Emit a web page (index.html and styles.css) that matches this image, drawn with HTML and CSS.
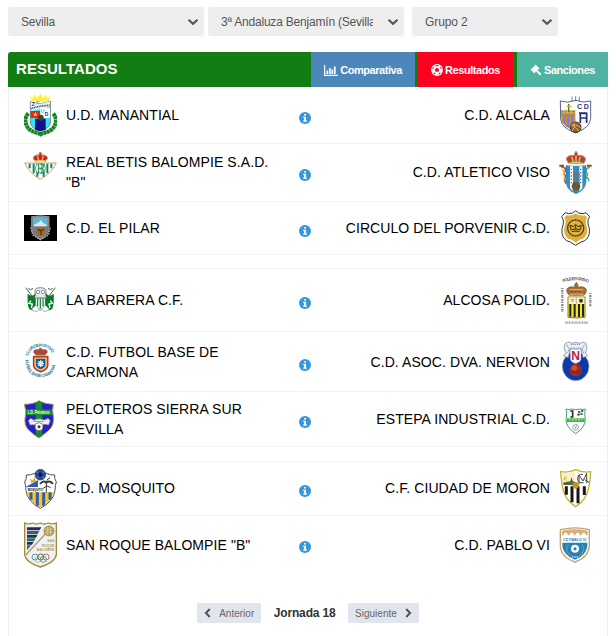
FILE: index.html
```html
<!DOCTYPE html>
<html lang="es">
  <head>
    <meta charset="UTF-8" />
    <meta name="viewport" content="width=device-width, initial-scale=1.0" />
    <title>Resultados</title>
    <link rel="stylesheet" href="styles.css">
  </head>
  <body>
    <svg class="defs">
      <symbol id="info" viewBox="0 0 12 12">
        <circle cx="6" cy="6" r="6" fill="#3498db" />
        <path d="M5 1.9h2v1.7H5zM4.2 4.8H7v3.6h.9v1.4H4.2V8.4h.9V6.1h-.9z" fill="#fff" />
      </symbol>
      <symbol id="arrow" viewBox="0 0 12 8">
        <path d="M1.500 1.700L6 5.700l4.500-4" fill="none" stroke="#555" stroke-width="2.200" />
      </symbol>
    </svg>

    <div class="filters">
      <div class="select"><span>Sevilla</span><svg><use href="#arrow" /></svg></div>
      <div class="select"><span>3ª Andaluza Benjamín (Sevilla)</span><svg><use href="#arrow" /></svg></div>
      <div class="select group"><span>Grupo 2</span><svg><use href="#arrow" /></svg></div>
    </div>

    <div class="panel">
      <div class="header">
        <h1>RESULTADOS</h1>
        <div class="tabs">
          <a class="tab blue">
            <svg width="14" height="11" viewBox="0 0 14 11"><path d="M.6 0v10.300H14" fill="none" stroke="#fff" stroke-width="1.200" /><path d="M3.300 9V5.500M5.800 9V3M8.300 9V4.500M10.800 9V1.500" fill="none" stroke="#fff" stroke-width="1.700" /></svg>
            <span>Comparativa</span>
          </a>
          <a class="tab red">
            <svg width="12" height="12" viewBox="0 0 12 12"><circle cx="6" cy="6" r="5.900" fill="#fff" /><path d="M6 3.700l2.200 1.600-.8 2.500H4.600l-.8-2.500zM3.900 1.300L6 2.500l2.100-1.200Q6 .5 3.900 1.300zM1 5.500l1.700-1.200.3-1.700Q1.200 3.500 1 5.500zM11 5.500L9.300 4.300 9 2.600q1.800.9 2 2.900zM2 8.700l2 .1.800 2q-1.900-.4-2.800-2.100zM10 8.700l-2 .1-.8 2q1.900-.4 2.800-2.100z" fill="#ff0021" /></svg>
            <span>Resultados</span>
          </a>
          <a class="tab teal">
            <svg width="12" height="12" viewBox="0 0 12 12"><path d="M5.500.5l4 4-1.200.7-1 1 4.200 3.600-1.700 1.700L6.200 7.300l-1 1-.7 1.200-4-4 1.200-.7 3-3z" fill="#fff" /></svg>
            <span>Sanciones</span>
          </a>
        </div>
      </div>

      <div class="match h57">
        <!-- U.D. Manantial -->
        <svg class="crest" width="33" height="43" viewBox="0 0 99 129">
          <path d="M13 58C-1 72 3 97 19 108c12 8 23 8 31 13 8-5 19-5 31-13 16-11 20-36 6-50" fill="none" stroke="#128522" stroke-width="12" stroke-dasharray="9 1" />
          <path d="M19 23q31 12 60-2v66q-4 17-30 25-26-8-30-25z" fill="#38e4f0" stroke="#555" stroke-width="2" />
          <path d="M20 24q30 11 58-2v17L20 51z" fill="#e8f3fc" />
          <path d="M20 51h28v21H20z" fill="#e52519" />
          <path d="M49 42h29v30H49z" fill="#fff" />
          <path d="M33 74h32v33l-16 5-16-5z" fill="#10138c" />
          <path d="M34 54l2 5h5l-4 3 2 6-5-4-5 4 2-6-4-3h5z" fill="#ffe32b" />
          <path d="M16 4l9 10 7-12 7 11 10-14 8 14 8-11 6 12 10-10-7 16q-25 7-51 0z" fill="#fff238" />
          <path d="M20 44q28-9 58-10" stroke="#446" stroke-width="5" stroke-dasharray="3 2" fill="none" />
          <text x="23" y="36" class="mark navy">Z</text><text x="36" y="34" class="mark cyan">F</text>
          <text x="50" y="56" class="mark cyan">U</text><text x="62" y="66" class="mark navy">D</text>
          <circle cx="50" cy="71" r="9" fill="#503b28" />
        </svg>
        <div class="team">U.D. MANANTIAL</div>
        <svg class="info"><use href="#info" /></svg>
        <div class="team away">C.D. ALCALA</div>
        <!-- C.D. Alcala -->
        <svg class="crest" width="33" height="38" viewBox="0 0 99 114">
          <path d="M4 15q23 8 46-2 22 9 45 2v52q-2 29-45 43Q8 98 5 69z" fill="#fff" stroke="#36457c" stroke-width="2.500" />
          <path d="M39 1v14M50 0v16M61 2v13" stroke="#36457c" stroke-width="2" />
          <path d="M6 43h43v17H6z" fill="#b58a30" />
          <path d="M7 60h42v46Q11 91 8 72z" fill="#8876dd" />
          <path d="M11 60v22M22 60v34M33 60v36M45 58v35" stroke="#c79526" stroke-width="5" />
          <path d="M8 51h41M13 43v8M24 43v8M36 43v8" stroke="#e9d28b" stroke-width="2" />
          <path d="M29 24v23" stroke="#3a7d36" stroke-width="4" />
          <path d="M23 31h14" stroke="#dfa721" stroke-width="4" />
          <text x="54" y="39" class="mark big navy">C</text><text x="74" y="39" class="mark big navy">D</text>
          <path d="M64 81V52h19v29M64 66h19M60 51h23" fill="none" stroke="#202d77" stroke-width="5" />
          <circle cx="50" cy="94" r="16" fill="#8b622c" stroke="#3d2e23" stroke-width="3" />
          <path d="M35 90q15-8 30 5M40 105q9-11 5-26M38 84l23 22" stroke="#e2b063" stroke-width="3" fill="none" />
        </svg>
      </div>

      <div class="match h58">
        <!-- Real Betis Balompie -->
        <svg class="crest top" width="33" height="28" viewBox="0 0 99 84">
          <path d="M2 33h95Q81 65 49 82 17 65 2 33z" fill="#fff" stroke="#d1a15b" stroke-width="3" />
          <path d="M17 35v14M29 35v29M40 35v39M59 35v39M70 35v29M82 35v14" stroke="#158b54" stroke-width="6" />
          <circle cx="49" cy="49" r="15" fill="#e5f2e8" stroke="#239064" stroke-width="2" />
          <path d="M44 36v28M54 36v28M42 49h15" stroke="#26865a" stroke-width="3" />
          <path d="M49 37q12 0 10 7t-10 6q13 0 11 7t-11 6" fill="none" stroke="#26865a" stroke-width="3" />
          <path d="M33 26Q22 16 33 11q7-4 12-1V4l4-4 4 4v6q5-3 12 1 11 5 0 15z" fill="#c8202b" stroke="#cb9947" stroke-width="3" />
          <path d="M33 29q17-6 33 0M40 12l4 13M58 12l-4 13" stroke="#edbe60" stroke-width="4" fill="none" />
        </svg>
        <div class="team">REAL BETIS BALOMPIE S.A.D. "B"</div>
        <svg class="info"><use href="#info" /></svg>
        <div class="team away">C.D. ATLETICO VISO</div>
        <!-- C.D. Atletico Viso -->
        <svg class="crest" width="33" height="44" viewBox="0 0 99 132">
          <path d="M6 46q16 4 13 14-9 8 2 15-9 12 1 23" fill="none" stroke="#d43f32" stroke-width="5" />
          <path d="M8 55q11 7 6 14 6 14 4 20" fill="none" stroke="#edc13b" stroke-width="4" />
          <path d="M93 48q-15 5-11 17 10 7-3 13 14 4 9 13" fill="none" stroke="#45b06d" stroke-width="4" />
          <path d="M1 44h14M84 44h14" stroke="#8d4b1c" stroke-width="6" />
          <path d="M21 44q30 4 60 0v42q2 30-30 42-32-12-30-42z" fill="#2493d1" stroke="#456" stroke-width="1.500" />
          <path d="M33 46h9v73q-6-3-9-8zM61 46h9v66q-4 5-9 8z" fill="#fff" />
          <path d="M37 53v50M65 53v50" stroke="#667" stroke-width="4" stroke-dasharray="4 6" />
          <path d="M47 63v45M54 56v51M60 65v34M42 71h20" stroke="#64707c" stroke-width="3" />
          <circle cx="51" cy="106" r="13" fill="#6c5731" />
          <path d="M30 38q-14-16-2-22 9-5 19-2V7l4-6 4 6v7q11-3 20 3 10 6-2 21z" fill="#c13b36" stroke="#b58d4b" stroke-width="3" />
          <path d="M30 38q20-7 43 0M38 17l5 16M51 14v18M64 17l-5 16" stroke="#eac57a" stroke-width="4" fill="none" />
          <path d="M34 29h35" stroke="#398b52" stroke-width="4" stroke-dasharray="5 5" />
        </svg>
      </div>

      <div class="match h53">
        <!-- C.D. El Pilar -->
        <svg class="crest" width="33" height="26" viewBox="0 0 99 78">
          <path d="M0 0h99v78H0z" fill="#000" />
          <path d="M23 5q27-5 52 0v32q1 24-26 37-27-13-26-37z" fill="#737b80" stroke="#8f979c" stroke-width="3" />
          <path d="M27 8q23-4 44 0v26H27z" fill="#5cb7d3" />
          <path d="M30 29l14-7 8-7 5 9 11 5v5H30z" fill="#dce6e2" />
          <path d="M20 37l6 23 23 14 24-14 6-23" fill="none" stroke="#b9ac98" stroke-width="4" stroke-dasharray="5 3" />
          <circle cx="50" cy="49" r="13" fill="#a86425" />
          <path d="M40 43l11 4 9-5M51 47v13" stroke="#38251b" stroke-width="3" fill="none" />
        </svg>
        <div class="team">C.D. EL PILAR</div>
        <svg class="info"><use href="#info" /></svg>
        <div class="team away">CIRCULO DEL PORVENIR C.D.</div>
        <!-- Circulo del Porvenir -->
        <svg class="crest" width="33" height="36" viewBox="0 0 99 108">
          <path d="M50 2q8 10 22 9l9-3 11 12q-7 8-5 22 6 13 4 28-4 22-25 26L50 106 34 96Q13 92 9 70 7 55 13 42q2-14-5-22L19 8l9 3Q42 12 50 2z" fill="#fff" stroke="#333" stroke-width="3" />
          <path d="M50 10q10 9 27 6l7 6q-5 10-3 21 6 13 3 25-4 18-22 21L50 98 38 89Q20 86 16 68q-3-12 3-25 2-11-3-21l7-6q17 3 27-6z" fill="#e0b13a" />
          <circle cx="50" cy="54" r="24" fill="none" stroke="#353026" stroke-width="4" stroke-dasharray="4 1" />
          <path d="M36 59l-3-13 10 4 7-7 7 7 10-4-3 13q-14-4-28 0zM38 65q12-4 24 0M50 45v13" fill="none" stroke="#353026" stroke-width="3" />
        </svg>
      </div>

      <div class="spacer h14"></div>

      <div class="match h63">
        <!-- La Barrera C.F. -->
        <svg class="crest" width="33" height="26" viewBox="0 0 99 78">
          <path d="M5 2l22 29M94 2L72 31M13 4q7 8 14 0M86 4q-7 8-14 0" stroke="#396742" stroke-width="3" fill="none" />
          <path d="M11 20q15 13 23-1l8 17v26q-16 14-27 3-6-16-4-45zM89 20q-15 13-23-1l-8 17v26q16 14 27 3 6-16 4-45z" fill="#0a7a26" />
          <path d="M21 41l-6 8 10 2-3 12M79 41l6 8-10 2 3 12" stroke="#fff" stroke-width="4" fill="none" />
          <path d="M33 14q-2-12 16-12t17 12q-3 12 2 20H31q5-8 2-20z" fill="#e5e8e5" stroke="#555" stroke-width="2" />
          <circle cx="42" cy="15" r="5" fill="#fff" stroke="#666" stroke-width="2" /><circle cx="57" cy="15" r="5" fill="#fff" stroke="#666" stroke-width="2" />
          <path d="M34 33h30v19q-5 13-15 18-10-5-15-18z" fill="#fff" stroke="#445" stroke-width="2" />
          <path d="M41 34v24M49 34v31M57 34v24" stroke="#228e45" stroke-width="4" />
          <path d="M23 67q13 12 23 0l-10-13M76 67q-13 12-23 0l10-13" fill="#fff" stroke="#aaa" stroke-width="3" />
        </svg>
        <div class="team">LA BARRERA C.F.</div>
        <svg class="info"><use href="#info" /></svg>
        <div class="team away">ALCOSA POLID.</div>
        <!-- Alcosa Polid. -->
        <svg class="crest" width="33" height="50" viewBox="0 0 99 150">
          <path id="alcosa-top" d="M12 22q38-14 78 2" fill="none" />
          <text class="ring gray"><textPath href="#alcosa-top" textLength="78">POLIDEPORTIVO</textPath></text>
          <path d="M10 39v71M94 54v41" stroke="#888" stroke-width="7" stroke-dasharray="3 3 6 2" />
          <path d="M19 143h69" stroke="#999" stroke-width="7" stroke-dasharray="4 2 2 2" />
          <path d="M30 61Q16 44 30 37q8-4 17 0v-8l5-7 5 7v8q9-4 18 0 15 7 0 24z" fill="#a56e32" stroke="#765027" stroke-width="2" />
          <path d="M31 60q20-7 43 0M32 44h41" stroke="#d8ac57" stroke-width="4" fill="none" />
          <path d="M35 50h34" stroke="#b52f2c" stroke-width="4" stroke-dasharray="6 6" />
          <path d="M27 66h51v61q-23 4-51 0z" fill="#f2e42c" stroke="#8f7833" stroke-width="3" />
          <path d="M29 67h47v20H29z" fill="#f5f0d8" />
          <path d="M34 87v38M47 87v39M60 87v39M72 87v38" stroke="#242420" stroke-width="6" />
          <path d="M52 67v20" stroke="#b49b51" stroke-width="2" /><circle cx="66" cy="77" r="6" fill="#463927" /><path d="M35 74h11M38 79h5" stroke="#c3a54d" stroke-width="4" />
        </svg>
      </div>

      <div class="match h60">
        <!-- C.D. Futbol Base de Carmona -->
        <svg class="crest up" width="33" height="35" viewBox="0 0 99 105">
          <path id="carmona-top" d="M13 39Q19 12 49 11t38 28" fill="none" />
          <path id="carmona-bottom" d="M4 51q3 50 46 51t46-51" fill="none" />
          <text class="ring teal-text"><textPath href="#carmona-top" textLength="92">CLUB DEPORTIVO</textPath></text>
          <text class="ring teal-text"><textPath href="#carmona-bottom" textLength="140">FUTBOL BASE CARMONA</textPath></text>
          <path d="M36 35q-13-9-2-15h10l5-6 6 6h10q11 6-2 15z" fill="#b84238" stroke="#795542" stroke-width="2" />
          <path d="M36 35h28" stroke="#8e6537" stroke-width="4" />
          <path d="M29 41h42v27q-2 13-21 18-19-5-21-18z" fill="#f0cf52" stroke="#bb3733" stroke-width="5" />
          <path d="M36 47h28v21q-3 7-14 11-11-4-14-11z" fill="#1759a6" />
          <path d="M50 52v20M40 62h20M43 55l14 14M57 55L43 69" stroke="#e6f7ff" stroke-width="4" />
        </svg>
        <div class="team">C.D. FUTBOL BASE DE CARMONA</div>
        <svg class="info"><use href="#info" /></svg>
        <div class="team away">C.D. ASOC. DVA. NERVION</div>
        <!-- C.D. Asoc. Dva. Nervion -->
        <svg class="crest" width="33" height="41" viewBox="0 0 99 123">
          <ellipse cx="50" cy="76" rx="40" ry="43" fill="#0938b2" stroke="#b7ad75" stroke-width="2" />
          <path d="M19 7q13-7 19 0 12-6 24 0 8-7 19 0l3 13-5 17 7 7-14 6-6-28H34l-6 28-15-6 8-7-6-17z" fill="#eaf0f7" stroke="#68799a" stroke-width="2" />
          <path d="M23 11l8 13-6 13M77 11l-8 13 6 13M35 10h30" fill="none" stroke="#7c8ba6" stroke-width="3" stroke-dasharray="4 2" />
          <path d="M34 25h32v30q-1 8-16 13-15-5-16-13z" fill="#fff" stroke="#8696b0" stroke-width="1.500" />
          <text x="50" y="57" class="mark letter">N</text>
          <circle cx="50" cy="87" r="19" fill="#9f2c20" /><circle cx="46" cy="81" r="8" fill="#c95333" />
          <path d="M32 90q17 9 36-2" fill="none" stroke="#5a2020" stroke-width="2" />
        </svg>
      </div>

      <div class="match h55">
        <!-- Peloteros Sierra Sur -->
        <svg class="crest" width="33" height="39" viewBox="0 0 99 117">
          <path d="M45 2q16 10 43 11-4 19 0 35 4 29-15 44-15 13-28 22-15-9-29-22Q-2 77 4 48q3-16-3-35Q30 12 45 2z" fill="#2420cd" stroke="#b8a64d" stroke-width="3" />
          <path d="M35 7q10-4 20 0v100l-10 5-10-5zM6 28h78v18H6z" fill="#168b2c" />
          <text x="11" y="43" class="mark white" textLength="66" lengthAdjust="spacingAndGlyphs">L.D. Peloteros</text>
          <path d="M13 62l7-7 9 5q16-7 33 0l10-5 7 7-5 13-14-2-14 11-15-10-13 1z" fill="#eef0ef" stroke="#777" stroke-width="2" />
          <path d="M29 64h31" stroke="#567" stroke-width="3" stroke-dasharray="3 2" />
          <circle cx="45" cy="80" r="12" fill="#fff" stroke="#555" stroke-width="2" /><path d="M45 75l5 4-2 6h-6l-2-6z" fill="#444" />
        </svg>
        <div class="team">PELOTEROS SIERRA SUR SEVILLA</div>
        <svg class="info"><use href="#info" /></svg>
        <div class="team away">ESTEPA INDUSTRIAL C.D.</div>
        <!-- Estepa Industrial -->
        <svg class="crest down" width="33" height="27" viewBox="0 0 99 81">
          <path d="M21 3q9 4 17 0 12 4 25 0 7 4 16 0-4 13 0 31 0 24-29 43-29-19-29-43 4-18 0-31z" fill="#fff" stroke="#38aa65" stroke-width="3" />
          <path d="M24 31h53v11H24z" fill="#35b553" /><path d="M30 35h40" stroke="#b5d947" stroke-width="5" stroke-dasharray="6 3" />
          <path d="M34 9h7v18h-7M57 12h7M66 9h7M55 20h7M64 18h7" stroke="#26332d" stroke-width="5" fill="none" />
          <circle cx="50" cy="58" r="9" fill="#fff" stroke="#888" stroke-width="2" /><path d="M44 55l12 6M53 51l-6 15" stroke="#999" stroke-width="2" />
        </svg>
      </div>

      <div class="spacer h15"></div>

      <div class="match h54">
        <!-- C.D. Mosquito -->
        <svg class="crest" width="33" height="40" viewBox="0 0 99 120">
          <path d="M7 18q14 1 24-5h36q12 6 25 5-2 11 5 21-4 10-4 25-4 34-44 54Q10 98 6 64 6 49 2 39q7-10 5-21z" fill="#fff" stroke="#484f58" stroke-width="3" />
          <path d="M5 54l37-21v21z" fill="#3858b8" /><path d="M18 29l8 5 6-9 4 12-14 5z" fill="#ddb033" />
          <path d="M10 70h79q-5 28-40 45Q15 98 10 70z" fill="#f3cb16" />
          <path d="M21 70v22M40 70v40M59 70v40M78 70v22" stroke="#3659b5" stroke-width="9" />
          <path d="M8 56h48v11H8z" fill="#fff" />
          <text x="11" y="66" class="mark small" textLength="46" lengthAdjust="spacingAndGlyphs">MOSQUITO</text>
          <path d="M48 45q9-12 19-4 8-8 20 3" stroke="#37393e" stroke-width="6" fill="none" />
          <path d="M67 41v30M67 52l-10 6M67 50l13 6M68 34l10-8" stroke="#37393e" stroke-width="3" fill="none" />
          <circle cx="49" cy="17" r="16" fill="#284b9c" stroke="#303848" stroke-width="2" /><path d="M49 10l7 5-3 8h-8l-3-8z" fill="#151d3c" /><path d="M38 8l5 4M60 8l-5 4M39 27l5-5M60 27l-6-5" stroke="#799bdb" stroke-width="2" />
        </svg>
        <div class="team">C.D. MOSQUITO</div>
        <svg class="info"><use href="#info" /></svg>
        <div class="team away">C.F. CIUDAD DE MORON</div>
        <!-- C.F. Ciudad de Moron -->
        <svg class="crest" width="33" height="39" viewBox="0 0 99 117">
          <path d="M5 8q25 4 45-6 20 10 45 6-1 20-5 44-7 41-40 61-33-20-40-61Q6 28 5 8z" fill="#fff" stroke="#c5b421" stroke-width="4" />
          <path d="M9 11q22 3 40-5v41H13z" fill="#f4f0c9" />
          <path d="M17 19l3 6h6l-5 4 2 7-6-4-6 4 2-7" fill="#f3cb24" />
          <path d="M12 41l12-3 10-1 4-12 3 11 9 4v8H14z" fill="#526344" />
          <path d="M15 52h70q-7 38-35 57-28-19-35-57z" fill="#fff" />
          <path d="M22 52v25M39 52v48M57 52v51M76 52v26" stroke="#171717" stroke-width="9" />
          <path d="M72 16q-16-2-16 13t18 12M60 46V18l12 18 11-23v29M77 32l14 9" stroke="#444" stroke-width="3" fill="none" />
          <circle cx="50" cy="49" r="10" fill="#bd922c" />
        </svg>
      </div>

      <div class="match last h57">
        <!-- San Roque Balompie -->
        <svg class="crest" width="33" height="46" viewBox="0 0 99 138">
          <path d="M2 3q12 5 25 0 10 6 22 0 12 6 24 0 12 5 24 0v95q-3 23-48 37Q5 121 2 98z" fill="#eef1f5" stroke="#a58b37" stroke-width="4" />
          <path d="M9 16h43l-5 9H9z" fill="#30265e" /><path d="M9 27h37l-5 9H9z" fill="#217357" /><path d="M9 38h32l-5 9H9z" fill="#30265e" /><path d="M9 49h26l-5 9H9z" fill="#217357" /><path d="M9 60h20l-5 8H9z" fill="#30265e" /><path d="M9 70h13L9 84z" fill="#217357" />
          <path d="M5 99L65 35l15-18" stroke="#b29a4d" stroke-width="4" fill="none" />
          <circle cx="75" cy="27" r="15" fill="#b6a565" stroke="#8d7a3b" stroke-width="2" /><path d="M65 22h20M64 30h22M71 14v25M80 14v25" stroke="#e0d7a7" stroke-width="2" />
          <text x="91" y="61" class="mark gold">SAN</text><text x="91" y="74" class="mark gold">ROQUE</text><text x="91" y="86" class="mark gold">BALOMPIE</text>
          <g fill="none" stroke-width="2.500"><circle cx="33" cy="105" r="9" stroke="#3a83b5" /><circle cx="50" cy="105" r="9" stroke="#444" /><circle cx="66" cy="105" r="9" stroke="#ce4650" /><circle cx="42" cy="112" r="9" stroke="#cfaf4c" /><circle cx="58" cy="112" r="9" stroke="#43946c" /></g>
        </svg>
        <div class="team">SAN ROQUE BALOMPIE "B"</div>
        <svg class="info"><use href="#info" /></svg>
        <div class="team away">C.D. PABLO VI</div>
        <!-- C.D. Pablo VI -->
        <svg class="crest" width="33" height="36" viewBox="0 0 99 108">
          <path d="M4 8q46-11 87 0v49q-3 35-43 48Q7 92 4 57z" fill="#fff" stroke="#c5a374" stroke-width="4" />
          <path d="M9 11q39-8 77 0v14H9z" fill="#d3b180" />
          <path d="M14 30v-9q6-7 12 0v9M32 30v-9q6-7 12 0v9M50 30v-9q6-7 12 0v9M68 30v-9q6-7 12 0v9" fill="#fff" />
          <text x="12" y="43" class="mark blue-text" textLength="70" lengthAdjust="spacingAndGlyphs">CD PABLO VI</text>
          <path d="M10 47h75v10q-3 28-37 41-35-13-38-41z" fill="#267fb8" />
          <path d="M28 53q-13 19 9 33M69 53q13 19-9 33" stroke="#80a981" stroke-width="4" stroke-dasharray="4 2" fill="none" />
          <circle cx="48" cy="65" r="12" fill="#fff" /><path d="M48 60l5 4-2 6h-6l-2-6z" fill="#267fb8" /><path d="M39 90h19" stroke="#d9edf6" stroke-width="4" stroke-dasharray="3 2" />
        </svg>
      </div>

      <div class="pager">
        <a class="page-link"><svg width="7" height="10" viewBox="0 0 7 10"><path d="M5.800 1L1.900 5l3.900 4" fill="none" stroke="#555" stroke-width="2" /></svg><span>Anterior</span></a>
        <strong>Jornada 18</strong>
        <a class="page-link"><span>Siguiente</span><svg width="7" height="10" viewBox="0 0 7 10"><path d="M1.200 1l3.900 4-3.900 4" fill="none" stroke="#555" stroke-width="2" /></svg></a>
      </div>
    </div>
  </body>
</html>
```

FILE: styles.css
```css
* {
  box-sizing: border-box;
}

body {
  margin: 0;
  padding: 7px 8px 0;
  height: 636px;
  overflow: hidden;
  background-color: #fff;
  font-family: "Liberation Sans", Arial, sans-serif;
  color: #000;
}

.defs {
  display: none;
}

/* Filters */
.filters {
  display: flex;
  gap: 4px;
}

.select {
  display: flex;
  align-items: center;
  justify-content: space-between;
  width: 196px;
  height: 29px;
  padding: 0 5px 0 13px;
  border-radius: 3px;
  background-color: #eee;
  color: #555;
  font-size: 12px;
  letter-spacing: -0.2px;
}

.select span {
  width: 152px;
  overflow: hidden;
  white-space: nowrap;
}

.select svg {
  width: 12px;
  height: 8px;
}

.select.group {
  width: 146px;
  margin-left: 4px;
  letter-spacing: -0.1px;
}

.select.group span {
  width: 100px;
}

/* Results panel */
.panel {
  height: 600px;
  margin-top: 16px;
  border: 1px solid #eee;
  border-top: 0;
  border-radius: 3px 3px 0 0;
}

.header {
  display: flex;
  justify-content: space-between;
  height: 35px;
  margin: 0 -1px;
  padding-left: 8px;
  border-radius: 3px 0 0 0;
  background-color: #127d12;
  color: #fff;
}

.header h1 {
  margin: 0;
  font-size: 15px;
  line-height: 34px;
  letter-spacing: 0.05px;
}

.tabs {
  display: flex;
  gap: 3px;
}

.tab {
  display: flex;
  align-items: center;
  justify-content: center;
  gap: 2px;
  padding-top: 1px;
  font-size: 11px;
  font-weight: bold;
  letter-spacing: -0.45px;
}

.blue {
  width: 104px;
  background-color: #4b87b9;
}

.red {
  width: 95px;
  background-color: #ff0021;
}

.teal {
  width: 91px;
  margin-left: 1px;
  background-color: #4fb3a2;
}

/* Match rows */
.match {
  display: grid;
  grid-template-columns: 42px 214px 50px 220px 42px;
  align-items: center;
  padding: 0 15px;
  border-bottom: 1px solid #f1f3f5;
}

.match.last {
  border-bottom: 0;
}

.spacer {
  border-bottom: 1px solid #f1f3f5;
}

.h14 { height: 14px; }
.h15 { height: 15px; }
.h53 { height: 53px; }
.h54 { height: 54px; }
.h55 { height: 55px; }
.h57 { height: 57px; }
.h58 { height: 58px; }
.h60 { height: 60px; }
.h63 { height: 63px; }

.team {
  font-size: 14px;
  line-height: 20px;
  letter-spacing: 0.08px;
}

.h58 .team,
.h54 .team {
  margin-bottom: 2px;
}

.away {
  text-align: right;
}

.info {
  width: 12px;
  height: 12px;
  margin-top: 5px;
  justify-self: center;
}

.h60 .info {
  margin-top: 7px;
}

.crest {
  display: block;
}

.away + .crest {
  justify-self: end;
}

.crest.top {
  align-self: start;
  margin-top: 8px;
}

.crest.up {
  margin-bottom: 3px;
}

.crest.down {
  margin-top: 4px;
}

/* Lettering inside the crests */
.mark {
  font-size: 15px;
  font-weight: bold;
}

.mark.big {
  font-size: 21px;
}

.mark.small {
  font-size: 11px;
}

.mark.letter {
  font-size: 36px;
  text-anchor: middle;
  fill: #b81b4b;
}

.mark.gold {
  font-size: 10px;
  text-anchor: end;
  fill: #b49b52;
}

.mark.white {
  font-size: 14px;
  fill: #fff;
}

.mark.blue-text {
  font-size: 13px;
  fill: #267fb8;
}

.ring {
  font-size: 13px;
  font-weight: bold;
}

.gray {
  fill: #666;
}

.teal-text {
  fill: #347d9c;
}

.navy {
  fill: #26358a;
}

.cyan {
  fill: #28c9df;
}

/* Round navigation */
.pager {
  display: flex;
  align-items: center;
  justify-content: center;
  gap: 12.5px;
  margin-top: 30px;
}

.pager strong {
  color: #333;
  font-size: 12px;
  line-height: 18px;
  letter-spacing: -0.15px;
}

.page-link {
  display: flex;
  align-items: center;
  gap: 8px;
  height: 20px;
  padding: 0 7px;
  border-radius: 2px;
  background-color: #e1e5ec;
  color: #666;
  font-size: 10px;
}
```
